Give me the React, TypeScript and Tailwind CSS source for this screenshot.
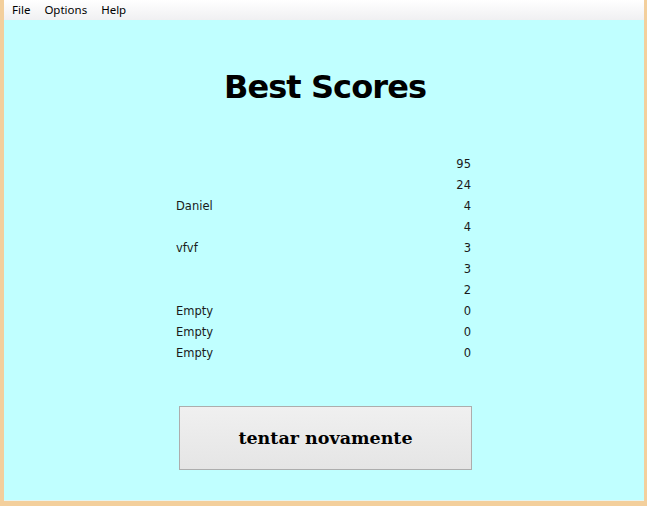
import React from "react";

const rows: [string, string][] = [
  ["", "95"],
  ["", "24"],
  ["Daniel", "4"],
  ["", "4"],
  ["vfvf", "3"],
  ["", "3"],
  ["", "2"],
  ["Empty", "0"],
  ["Empty", "0"],
  ["Empty", "0"],
];

export default function App() {
  return (
    <div className="w-[647px] h-[506px] bg-[#f3cf9c] pl-[4px] pr-[3px] pb-[5px] flex flex-col">
      <div className="h-[20px] bg-gradient-to-b from-[#ffffff] to-[#f0f0f2] flex items-center text-[11.5px] text-black font-['Noto_Sans',sans-serif] leading-none">
        <span className="ml-[8px]">File</span>
        <span className="ml-[14px]">Options</span>
        <span className="ml-[14px]">Help</span>
      </div>
      <div className="flex-1 bg-[#c0ffff] border-b border-[#e6f4f0] flex flex-col items-center">
        <h1 className="mt-[47px] ml-[2px] h-[40px] leading-[40px] text-[32px] font-bold text-black font-['DejaVu_Sans',sans-serif] tracking-[-0.9px]">
          Best Scores
        </h1>
        <div className="mt-[47px] w-[296px] flex flex-col text-[11.5px] text-[#1a1a1a] font-['DejaVu_Sans',sans-serif]">
          {rows.map(([n, s], i) => (
            <div key={i} className="h-[21px] flex items-center justify-between">
              <span>{n}</span>
              <span className="pr-[1px]">{s}</span>
            </div>
          ))}
        </div>
        <button className="mt-[42px] ml-[3px] w-[293px] h-[64px] border border-[#adadad] bg-gradient-to-b from-[#f0f0f0] to-[#e5e5e5] flex items-center justify-center text-[17.5px] font-black text-black font-['DejaVu_Serif',serif]">
          tentar novamente
        </button>
      </div>
    </div>
  );
}
